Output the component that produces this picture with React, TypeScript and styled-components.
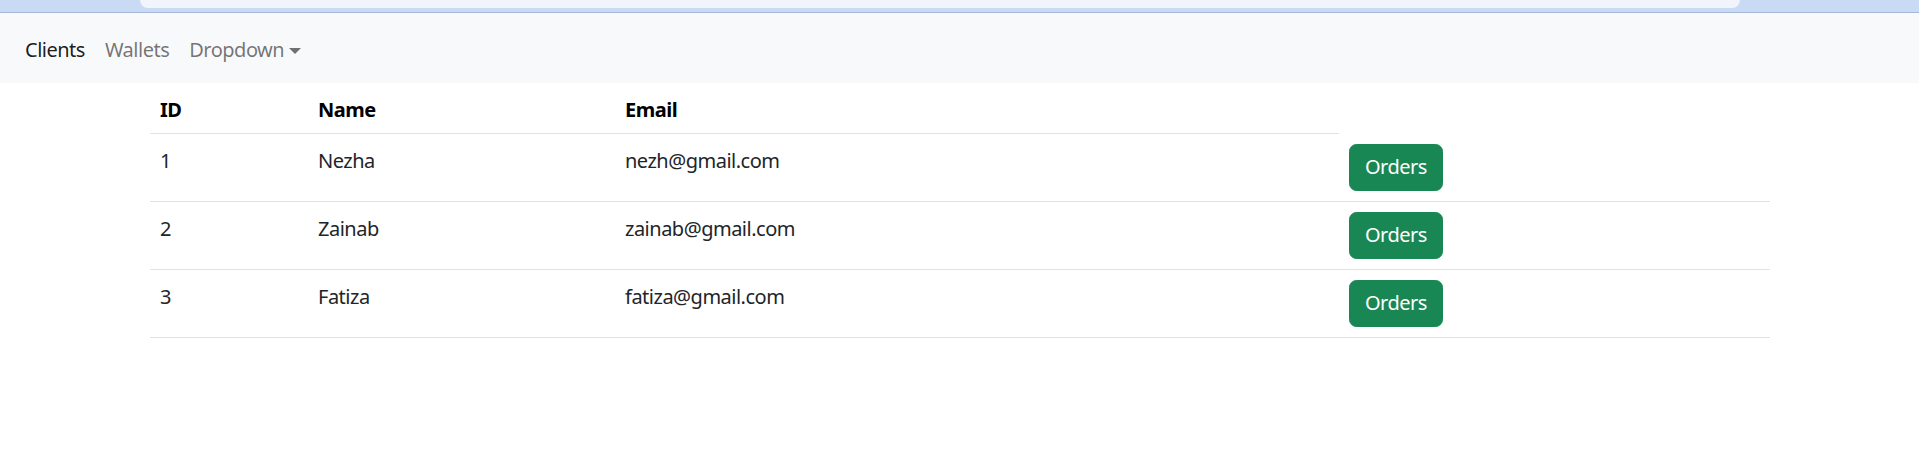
import React from "react";
import styled, { createGlobalStyle } from "styled-components";

const Global = createGlobalStyle`
  html, body { margin: 0; padding: 0; background: #fff; }
  body {
    font-family: "Noto Sans", "Open Sans", sans-serif;
    font-size: 20px;
    line-height: 30px;
    letter-spacing: -0.5px;
    color: #212529;
  }
  * { box-sizing: border-box; }
`;

const ChromeStrip = styled.div`
  height: 13px;
  background: #c8daf4;
  border-bottom: 1px solid #a5b8d8;
  padding-left: 140px;
`;

const Omnibox = styled.div`
  width: 1600px;
  height: 8px;
  background: #f1f5fb;
  border-radius: 0 0 9px 9px;
`;

const Navbar = styled.nav`
  background: #f8f9fa;
  height: 70px;
  padding: 10px 15px;
  display: flex;
  align-items: center;
`;

const NavList = styled.ul`
  list-style: none;
  margin: 0;
  padding: 0;
  display: flex;
`;

const NavLink = styled.a<{ $active?: boolean }>`
  display: inline-flex;
  align-items: center;
  padding: 12px 10px 8px;
  line-height: 30px;
  color: ${(p) => (p.$active ? "rgba(0,0,0,0.9)" : "rgba(0,0,0,0.55)")};
  text-decoration: none;
  cursor: pointer;
`;

const Caret = styled.span`
  display: inline-block;
  margin-left: 5px;
  margin-top: 2px;
  border-top: 6px solid rgba(0,0,0,0.55);
  border-left: 6px solid transparent;
  border-right: 6px solid transparent;
`;

const Container = styled.div`
  width: 1650px;
  padding: 0 15px;
  margin: 0 auto 0 135px;
`;

const Table = styled.table`
  width: 1620px;
  border-collapse: collapse;
  table-layout: fixed;
  vertical-align: top;
  margin-bottom: 20px;
`;

const Th = styled.th`
  text-align: left;
  font-weight: 700;
  padding: 12px 10px 8px;
  line-height: 30px;
  border-bottom: 1px solid #dee2e6;
  color: #000;
`;

const Row = styled.tr`
  border-bottom: 1px solid #dee2e6;
`;

const Td = styled.td<{ $action?: boolean }>`
  padding: ${(p) => (p.$action ? "10px" : "12px 10px 8px")};
  line-height: 30px;
  vertical-align: top;
`;

const Button = styled.button`
  font-family: inherit;
  font-size: 20px;
  line-height: 30px;
  letter-spacing: -0.5px;
  padding: 7.5px 15px;
  border: 1px solid #198754;
  background: #198754;
  color: #fff;
  border-radius: 7.5px;
  cursor: pointer;
`;

const clients = [
  { id: 1, name: "Nezha", email: "nezh@gmail.com" },
  { id: 2, name: "Zainab", email: "zainab@gmail.com" },
  { id: 3, name: "Fatiza", email: "fatiza@gmail.com" },
];

export default function App() {
  return (
    <>
      <Global />
      <ChromeStrip>
        <Omnibox />
      </ChromeStrip>
      <Navbar>
        <NavList>
          <li><NavLink $active>Clients</NavLink></li>
          <li><NavLink>Wallets</NavLink></li>
          <li><NavLink>Dropdown<Caret /></NavLink></li>
        </NavList>
      </Navbar>
      <Container>
        <Table>
          <colgroup>
            <col style={{ width: 158 }} />
            <col style={{ width: 307 }} />
            <col style={{ width: 724 }} />
            <col style={{ width: 431 }} />
          </colgroup>
          <thead>
            <tr>
              <Th>ID</Th>
              <Th>Name</Th>
              <Th>Email</Th>
            </tr>
          </thead>
          <tbody>
            {clients.map((c) => (
              <Row key={c.id}>
                <Td>{c.id}</Td>
                <Td>{c.name}</Td>
                <Td>{c.email}</Td>
                <Td $action><Button>Orders</Button></Td>
              </Row>
            ))}
          </tbody>
        </Table>
      </Container>
    </>
  );
}
